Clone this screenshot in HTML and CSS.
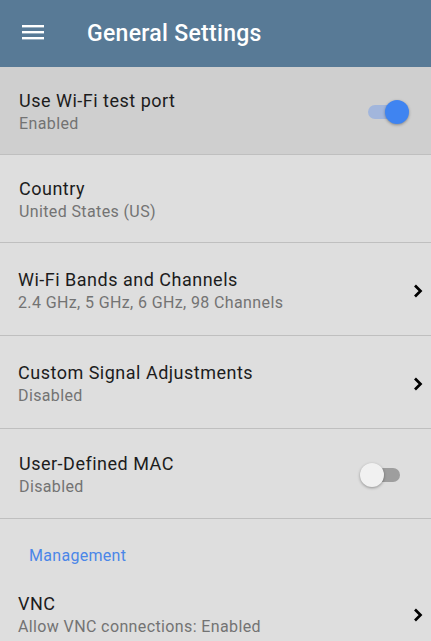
FILE: index.html
```html
<!DOCTYPE html>
<html>
<head>
<meta charset="utf-8">
<link rel="stylesheet" href="styles.css">
</head>
<body>
<div class="app">
  <header class="appbar">
    <svg class="menu" width="22" height="16" viewBox="0 0 22 16">
      <rect x="0" y="0" width="22" height="2.4" fill="#fff"/>
      <rect x="0" y="6" width="22" height="2.4" fill="#fff"/>
      <rect x="0" y="12" width="22" height="2.4" fill="#fff"/>
    </svg>
    <h1 class="title">General Settings</h1>
  </header>

  <div class="row row-active h87">
    <div class="text">
      <div class="primary">Use Wi-Fi test port</div>
      <div class="secondary">Enabled</div>
    </div>
    <div class="switch on"><span class="track"></span><span class="thumb"></span></div>
  </div>

  <div class="row h87">
    <div class="text">
      <div class="primary">Country</div>
      <div class="secondary">United States (US)</div>
    </div>
  </div>

  <div class="row h92 nav">
    <div class="text">
      <div class="primary">Wi-Fi Bands and Channels</div>
      <div class="secondary">2.4 GHz, 5 GHz, 6 GHz, 98 Channels</div>
    </div>
    <svg class="chev" width="10" height="14" viewBox="0 0 10 14"><path d="M2 1.5 L7.5 7 L2 12.5" fill="none" stroke="#000" stroke-width="2.7"/></svg>
  </div>

  <div class="row h92 nav">
    <div class="text">
      <div class="primary">Custom Signal Adjustments</div>
      <div class="secondary">Disabled</div>
    </div>
    <svg class="chev" width="10" height="14" viewBox="0 0 10 14"><path d="M2 1.5 L7.5 7 L2 12.5" fill="none" stroke="#000" stroke-width="2.7"/></svg>
  </div>

  <div class="row h89">
    <div class="text">
      <div class="primary">User-Defined MAC</div>
      <div class="secondary">Disabled</div>
    </div>
    <div class="switch"><span class="track"></span><span class="thumb"></span></div>
  </div>

  <div class="section">Management</div>

  <div class="row nav last">
    <div class="text">
      <div class="primary">VNC</div>
      <div class="secondary">Allow VNC connections: Enabled</div>
    </div>
    <svg class="chev" width="10" height="14" viewBox="0 0 10 14"><path d="M2 1.5 L7.5 7 L2 12.5" fill="none" stroke="#000" stroke-width="2.7"/></svg>
  </div>
</div>
</body>
</html>
```

FILE: styles.css
```css
html, body {
  margin: 0;
  padding: 0;
}
body {
  background: #dedede;
  font-family: Roboto, "Noto Sans", Arial, sans-serif;
  width: 431px;
  height: 641px;
  overflow: hidden;
}
.app {
  display: flex;
  flex-direction: column;
}
.appbar {
  height: 67px;
  background: #587a96;
  display: flex;
  align-items: center;
  box-sizing: border-box;
  padding-left: 22px;
}
.menu {
  display: block;
  margin-top: -1px;
}
.title {
  margin: 0 0 0 43px;
  color: #fff;
  font-size: 23px;
  font-weight: 500;
  letter-spacing: 0.3px;
}
.row {
  display: flex;
  align-items: center;
  box-sizing: content-box;
  padding: 3px 0 0 19px;
  border-bottom: 1px solid #bfbfbf;
}
.row.nav {
  padding-left: 18px;
}
.row-active {
  background: #cfcfcf;
}
.h87 { height: 84px; }
.h92 { height: 89px; }
.h89 { height: 86px; }
.text {
  flex: 1;
  min-width: 0;
}
.primary {
  font-size: 18px;
  line-height: 24px;
  letter-spacing: 0.5px;
  color: #1c1c1c;
}
.secondary {
  font-size: 16px;
  line-height: 22px;
  letter-spacing: 0.38px;
  color: #737373;
}
.chev {
  display: block;
  margin-right: 8px;
}
.switch {
  position: relative;
  width: 49px;
  height: 24px;
  margin-right: 22px;
}
.switch .track {
  position: absolute;
  left: 8px;
  top: 5px;
  width: 32px;
  height: 14px;
  border-radius: 7px;
  background: #9e9e9e;
}
.switch .thumb {
  position: absolute;
  left: 0;
  top: 0;
  width: 24px;
  height: 24px;
  border-radius: 50%;
  background: #f1f1f1;
  box-shadow: 0 1px 3px rgba(0,0,0,0.35);
}
.switch.on .track {
  background: #a2b6dc;
}
.switch.on .thumb {
  left: 25px;
  background: #3f84f1;
}
.section {
  height: 50px;
  box-sizing: border-box;
  padding: 26px 0 0 29px;
  font-size: 16px;
  line-height: 22px;
  letter-spacing: 0.3px;
  color: #4a86e8;
}
.row.last {
  border-bottom: none;
  height: 85px;
}
```
